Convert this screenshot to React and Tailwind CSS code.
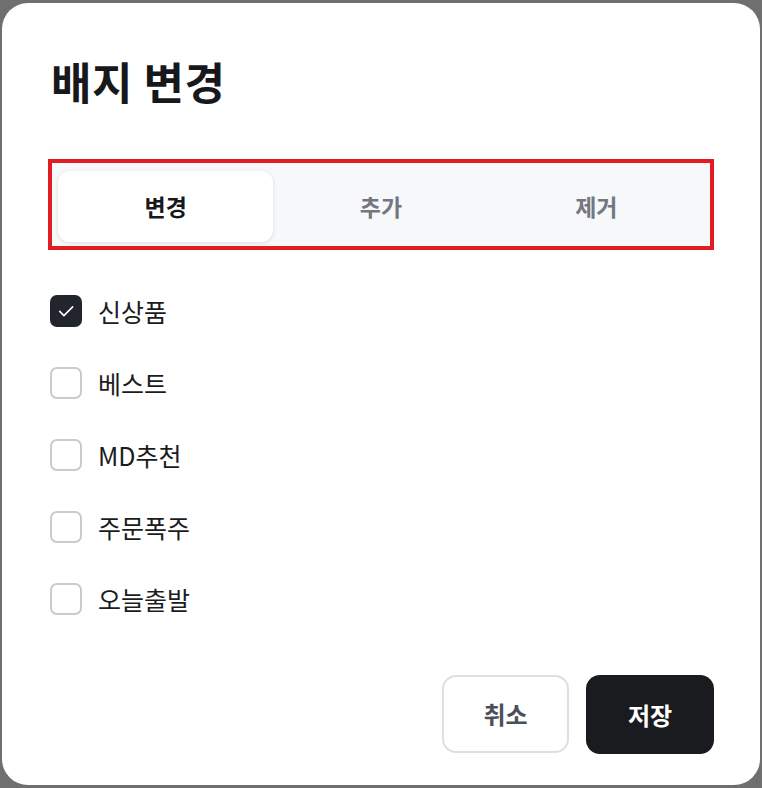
import React, { useState } from "react";

const FONT = { fontFamily: '"Noto Sans CJK KR", "Noto Sans", sans-serif' };

function Check({ checked }) {
  if (checked) {
    return (
      <span className="flex h-[32px] w-[32px] items-center justify-center rounded-[7px] bg-[#22252d]">
        <svg width="20" height="20" viewBox="0 0 24 24" fill="none" stroke="white" strokeWidth="1.9" strokeLinecap="round" strokeLinejoin="round">
          <path d="M4.5 12.5l5 5L20 7" />
        </svg>
      </span>
    );
  }
  return <span className="block h-[32px] w-[32px] rounded-[7px] border-2 border-[#c9cbcf] bg-white" />;
}

export default function App() {
  const [tab, setTab] = useState(0);
  const [checked, setChecked] = useState([true, false, false, false, false]);
  const tabs = ["변경", "추가", "제거"];
  const items = ["신상품", "베스트", "MD추천", "주문폭주", "오늘출발"];
  return (
    <div className="flex h-[788px] w-[762px] bg-[#6f6f70] pt-[3px] pb-[3px] pl-[2px] pr-[2px]" style={FONT}>
      <div className="flex flex-1 flex-col rounded-[26px] bg-white px-[46px] pb-[31px]">
        <h1 className="mt-[50px] pl-[3px] text-[44px] font-bold leading-[56px] tracking-[0.5px] text-[#17181c]">배지 변경</h1>
        <div className="mt-[50px] border-4 border-[#e31b23] bg-[#f7f8fa] px-[6px] pt-[8px] pb-[4px]">
          <div className="grid grid-cols-3">
            {tabs.map((t, i) => (
              <button
                key={t}
                onClick={() => setTab(i)}
                className={
                  "h-[71px] rounded-[12px] text-[23px] font-bold " +
                  (i === tab
                    ? "bg-white text-[#17181c] shadow-[0_1px_4px_rgba(0,0,0,0.12)]"
                    : "text-[#737780]")
                }
              >
                {t}
              </button>
            ))}
          </div>
        </div>
        <div className="mt-[45px] flex flex-col gap-[40px] pl-[2px]">
          {items.map((it, i) => (
            <label
              key={it}
              className="flex h-[32px] cursor-pointer items-center gap-[16px]"
              onClick={() => setChecked(checked.map((c, j) => (j === i ? !c : c)))}
            >
              <Check checked={checked[i]} />
              <span className="text-[25px] leading-[32px] text-[#1b1c20]">{it}</span>
            </label>
          ))}
        </div>
        <div className="mt-auto flex justify-end gap-[17px]">
          <button className="h-[78px] w-[127px] rounded-[14px] border-2 border-[#dedfe4] bg-white text-[24px] font-bold text-[#4b4f57]">
            취소
          </button>
          <button className="h-[79px] w-[128px] rounded-[14px] bg-[#1a1b1f] text-[24px] font-bold text-white">
            저장
          </button>
        </div>
      </div>
    </div>
  );
}
